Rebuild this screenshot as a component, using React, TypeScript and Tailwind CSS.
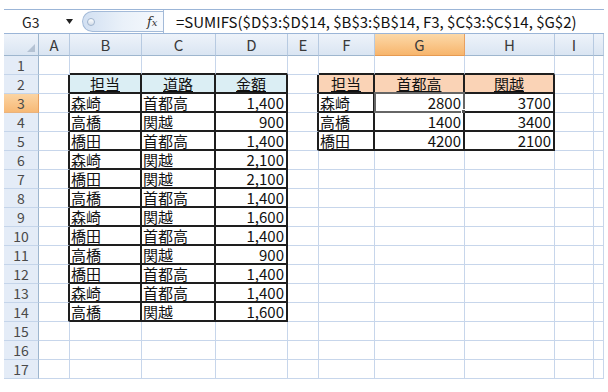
import React from "react";

const COLS = ["", "A", "B", "C", "D", "E", "F", "G", "H", "I", ""];

type CellData = { t: string; a: "l" | "r" | "c"; h?: "blue" | "peach" };

const leftRows: [string, string, string][] = [
  ["森崎", "首都高", "1,400"],
  ["高橋", "関越", "900"],
  ["橋田", "首都高", "1,400"],
  ["森崎", "関越", "2,100"],
  ["橋田", "関越", "2,100"],
  ["高橋", "首都高", "1,400"],
  ["森崎", "関越", "1,600"],
  ["橋田", "首都高", "1,400"],
  ["高橋", "関越", "900"],
  ["橋田", "首都高", "1,400"],
  ["森崎", "首都高", "1,400"],
  ["高橋", "関越", "1,600"],
];

const rightRows: [string, string, string][] = [
  ["森崎", "2800", "3700"],
  ["高橋", "1400", "3400"],
  ["橋田", "4200", "2100"],
];

function buildData(): Record<string, CellData> {
  const d: Record<string, CellData> = {};
  d["2-2"] = { t: "担当", a: "c", h: "blue" };
  d["2-3"] = { t: "道路", a: "c", h: "blue" };
  d["2-4"] = { t: "金額", a: "c", h: "blue" };
  leftRows.forEach((row, i) => {
    const r = i + 3;
    d[`${r}-2`] = { t: row[0], a: "l" };
    d[`${r}-3`] = { t: row[1], a: "l" };
    d[`${r}-4`] = { t: row[2], a: "r" };
  });
  d["2-6"] = { t: "担当", a: "c", h: "peach" };
  d["2-7"] = { t: "首都高", a: "c", h: "peach" };
  d["2-8"] = { t: "関越", a: "c", h: "peach" };
  rightRows.forEach((row, i) => {
    const r = i + 3;
    d[`${r}-6`] = { t: row[0], a: "l" };
    d[`${r}-7`] = { t: row[1], a: "r" };
    d[`${r}-8`] = { t: row[2], a: "r" };
  });
  return d;
}

const DATA = buildData();

function inTable(r: number, c: number) {
  return (r >= 2 && r <= 14 && c >= 2 && c <= 4) || (r >= 2 && r <= 5 && c >= 6 && c <= 8);
}

function DataCell({ r, c }: { r: number; c: number }) {
  const t = inTable(r, c);
  const blackR = t || inTable(r, c + 1);
  const blackB = t || inTable(r + 1, c);
  const rb = blackR ? "border-r-2 border-r-[#1e1e1e]" : "border-r border-r-[#c7d6eb]";
  const bb = blackB ? "border-b-2 border-b-[#1e1e1e]" : "border-b border-b-[#c7d6eb]";
  const d = DATA[`${r}-${c}`];
  const bg = d?.h === "blue" ? "bg-[#dbeef4]" : d?.h === "peach" ? "bg-[#fad3b6]" : "bg-white";
  const al = d?.a === "r" ? "justify-end pr-[2px]" : d?.a === "c" ? "justify-center" : "justify-start pl-[1px]";
  const sel = r === 3 && c === 7;
  return (
    <div className={`relative flex items-end overflow-visible ${rb} ${bb} ${bg} ${al}`}>
      {d && (
        <span
          className={`text-[15px] leading-[16px] whitespace-nowrap text-[#111] ${d.h ? "underline underline-offset-[1px] decoration-1" : ""}`}
        >
          {d.t}
        </span>
      )}
      {sel && (
        <div className="absolute left-[-1px] top-[-2px] right-[-2px] bottom-[-2px] border-2 border-[#666]">
          <div className="absolute right-[-4px] bottom-[-4px] w-[6px] h-[6px] bg-[#555] border border-white" />
        </div>
      )}
    </div>
  );
}

export default function App() {
  const rows = Array.from({ length: 17 }, (_, i) => i + 1);
  return (
    <div className="w-[608px] h-[392px] bg-white overflow-hidden font-['Noto_Sans_CJK_JP','Noto_Sans',sans-serif] text-black">
      <div className="h-[9px]" />
      {/* formula bar */}
      <div className="ml-[4px] w-[600px] h-[25px] border-t border-b border-[#9bb5d7] flex bg-white">
        <div className="w-[78px] flex items-center">
          <span className="pl-[18px] text-[14px] leading-none text-[#222]">G3</span>
          <svg width="7" height="5" viewBox="0 0 7 5" className="ml-[27px]">
            <path d="M0 0 L7 0 L3.5 5 Z" fill="#222" />
          </svg>
        </div>
        <div className="w-[81px] my-[1px] rounded-l-[11px] border border-r-0 border-[#a3bad8] bg-linear-to-r from-[#d2e0f2] via-[#eaf1f9] to-[#f6f9fd] relative flex items-center">
          <div className="ml-[4px] w-[8px] h-[8px] rounded-full border border-[#9fb3cc] bg-linear-to-b from-[#ffffff] to-[#d3dde9]" />
          <span className="absolute left-[64px] top-[1px] font-['DejaVu_Serif',serif] italic text-[13px] leading-[18px] text-[#333]">
            f<span className="text-[10px]">x</span>
          </span>
        </div>
        <div className="flex-1 border-l border-[#a3bad8] flex items-center pl-[12px] whitespace-nowrap text-[15px] leading-none text-[#111]">
          =SUMIFS($D$3:$D$14, $B$3:$B$14, F3, $C$3:$C$14, $G$2)
        </div>
      </div>
      {/* sheet grid */}
      <div className="ml-[4px] w-[600px] grid grid-cols-[35px_31px_72px_74px_72px_31px_56px_90px_90px_39px_10px] grid-rows-[22px_repeat(17,19px)]">
        {/* corner */}
        <div className="relative border-r border-b border-[#9eb6ce] bg-linear-to-b from-[#eef3fa] to-[#dae5f2]">
          <svg width="8" height="8" viewBox="0 0 8 8" className="absolute right-[3px] bottom-[3px]">
            <path d="M8 0 L8 8 L0 8 Z" fill="#b4c2d3" />
          </svg>
        </div>
        {COLS.slice(1).map((l, i) =>
          i + 1 === 7 ? (
            <div
              key={`h${i}`}
              className="flex items-center justify-center border-r border-r-[#e8a060] border-b border-b-[#e69a52] bg-linear-to-b from-[#fcd9a8] to-[#f7b56c] text-[15px] leading-none text-[#3a3a3a]"
            >
              {l}
            </div>
          ) : (
            <div
              key={`h${i}`}
              className="flex items-center justify-center border-r border-r-[#b7cae1] border-b border-b-[#9eb6ce] bg-linear-to-b from-[#eef3fa] to-[#dae5f2] text-[15px] leading-none text-[#3a3a3a]"
            >
              {l}
            </div>
          )
        )}
        {rows.map((r) => (
          <React.Fragment key={r}>
            {r === 3 ? (
              <div className="flex items-center justify-center border-r border-r-[#e8a060] border-b border-b-[#eab27c] bg-linear-to-b from-[#fbd4a3] to-[#f7b976] text-[14px] leading-none text-[#4a4a4a]">
                {r}
              </div>
            ) : (
              <div className="flex items-center justify-center border-r border-r-[#9eb6ce] border-b border-b-[#c5d5ea] bg-[#e4ecf7] text-[14px] leading-none text-[#4a4a4a]">
                {r}
              </div>
            )}
            {Array.from({ length: 10 }, (_, k) => k + 1).map((c) => (
              <DataCell key={`${r}-${c}`} r={r} c={c} />
            ))}
          </React.Fragment>
        ))}
      </div>
    </div>
  );
}
